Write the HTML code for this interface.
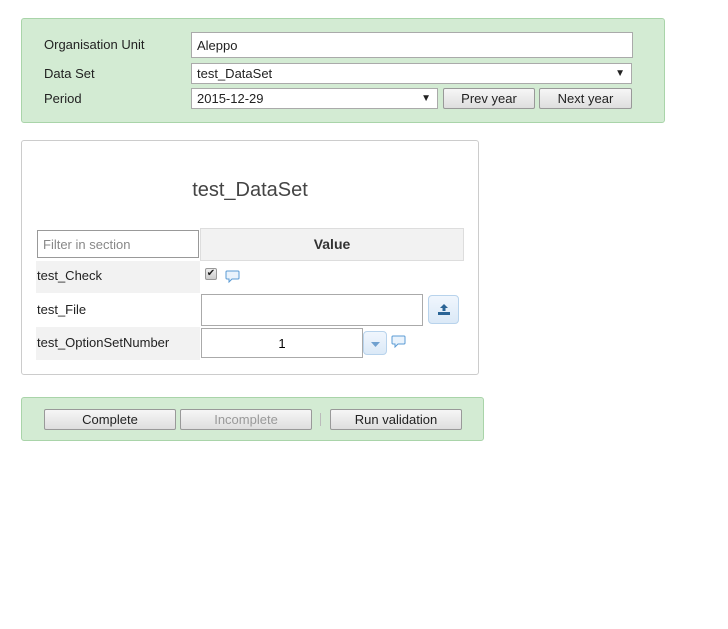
<!DOCTYPE html>
<html><head><meta charset="utf-8"><style>
body{margin:0;width:728px;height:629px;background:#fff;font-family:"Liberation Sans",sans-serif;font-size:13px;color:#222;position:relative;overflow:hidden}
div,span{position:absolute;box-sizing:border-box}
.green{background:#d3ebd3;border:1px solid #a9d4a9;border-radius:3px}
.lbl{line-height:16px}
.inp{background:#fff;border:1px solid #aaa;padding-left:5px;line-height:normal;display:flex;align-items:center}
.btn{background:linear-gradient(#f6f6f6,#dedede);border:1px solid #999;border-radius:2px;display:flex;align-items:center;justify-content:center}
.arrow{right:6px;font-size:10px}
.cell{background:#f2f2f2}
</style></head><body>
<div class="green" style="left:21px;top:18px;width:644px;height:105px"></div>
<span class="lbl" style="left:44px;top:37px">Organisation Unit</span>
<span class="lbl" style="left:44px;top:66px">Data Set</span>
<span class="lbl" style="left:44px;top:91px">Period</span>
<div class="inp" style="left:191px;top:32px;width:442px;height:26px">Aleppo</div>
<div class="inp" style="left:191px;top:63px;width:441px;height:21px">test_DataSet<span class="arrow">▼</span></div>
<div class="inp" style="left:191px;top:88px;width:247px;height:21px">2015-12-29<span class="arrow">▼</span></div>
<div class="btn" style="left:443px;top:88px;width:92px;height:21px">Prev year</div>
<div class="btn" style="left:539px;top:88px;width:93px;height:21px">Next year</div>

<div style="left:21px;top:140px;width:458px;height:235px;border:1px solid #ccc;border-radius:3px"></div>
<span style="left:21px;width:458px;top:179px;text-align:center;font-size:20px;color:#444">test_DataSet</span>
<div class="inp" style="left:37px;top:230px;width:162px;height:28px;border-color:#999;color:#888;font-size:13px">Filter in section</div>
<div style="left:200px;top:228px;width:264px;height:33px;background:#f2f2f2;border:1px solid #ddd;text-align:center;line-height:31px;font-weight:bold;font-size:14px;color:#333">Value</div>
<div class="cell" style="left:36px;top:261px;width:164px;height:32px"></div>
<div class="cell" style="left:36px;top:327px;width:164px;height:33px"></div>
<span class="lbl" style="left:37px;top:268px">test_Check</span>
<span class="lbl" style="left:37px;top:302px">test_File</span>
<span class="lbl" style="left:37px;top:335px">test_OptionSetNumber</span>
<div style="left:205px;top:268px;width:12px;height:12px;border:1px solid #999;border-radius:2px;background:linear-gradient(#eee,#ccc);font-size:10px;line-height:10px;text-align:center;color:#222">✔</div>
<svg style="position:absolute;left:225px;top:270px" width="15" height="13" viewBox="0 0 15 13"><path d="M2 1h11a1 1 0 0 1 1 1v6a1 1 0 0 1-1 1H7l-3 3V9H2a1 1 0 0 1-1-1V2a1 1 0 0 1 1-1z" fill="#eaf3fc" stroke="#5b9bd5"/></svg>
<div class="inp" style="left:201px;top:294px;width:222px;height:32px"></div>
<div style="left:428px;top:295px;width:31px;height:29px;border:1px solid #b8d3ec;border-radius:4px;background:linear-gradient(#f0f6fd,#dbe9f7)"><svg style="position:absolute;left:9px;top:8px" width="12" height="11" viewBox="0 0 12 11"><path d="M6 0L10 4H7.5V7h-3V4H2z" fill="#2a6496"/><rect x="0" y="8" width="12" height="3" fill="#2a6496"/></svg></div>
<div class="inp" style="left:201px;top:328px;width:162px;height:30px;justify-content:center;padding:0;color:#000">1</div>
<div style="left:363px;top:331px;width:24px;height:24px;border:1px solid #b8d3ec;border-radius:4px;background:linear-gradient(#f0f6fd,#dbe9f7)"><svg style="position:absolute;left:7px;top:10px" width="9" height="5" viewBox="0 0 9 5"><path d="M0 0h9L4.5 5z" fill="#6fa0cf"/></svg></div>
<svg style="position:absolute;left:391px;top:335px" width="15" height="13" viewBox="0 0 15 13"><path d="M2 1h11a1 1 0 0 1 1 1v6a1 1 0 0 1-1 1H7l-3 3V9H2a1 1 0 0 1-1-1V2a1 1 0 0 1 1-1z" fill="#eaf3fc" stroke="#5b9bd5"/></svg>

<div class="green" style="left:21px;top:397px;width:463px;height:44px"></div>
<div class="btn" style="left:44px;top:409px;width:132px;height:21px">Complete</div>
<div class="btn" style="left:180px;top:409px;width:132px;height:21px;color:#999">Incomplete</div>
<div style="left:320px;top:413px;width:1px;height:13px;background:#bbb"></div>
<div class="btn" style="left:330px;top:409px;width:132px;height:21px">Run validation</div>
</body></html>
